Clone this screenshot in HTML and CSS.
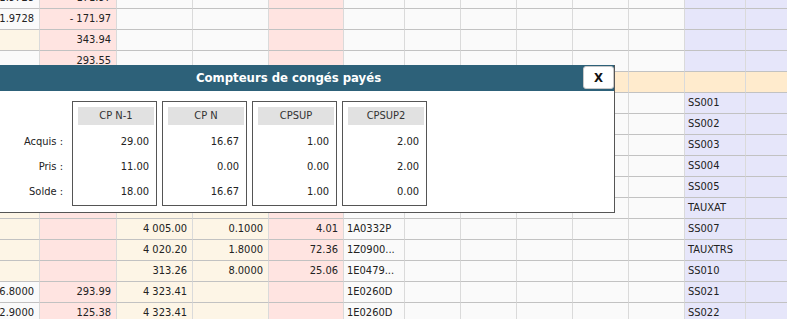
FILE: index.html
```html
<!DOCTYPE html>
<html lang="fr">
<head>
  <meta charset="UTF-8">
  <meta name="viewport" content="width=device-width, initial-scale=1">
  <title>Compteurs de congés payés</title>
  <link rel="stylesheet" href="styles.css">
</head>
<body>

  <!-- Grille des rubriques (derrière la fenêtre) -->
  <div class="grille" id="grille"></div>

  <!-- Fenêtre : compteurs de congés -->
  <div class="modale">
    <div class="modale-titre">
      Compteurs de congés payés
      <button class="fermer">X</button>
    </div>
    <div class="modale-corps">
      <div class="libelles">
        <div>Acquis :</div>
        <div>Pris :</div>
        <div>Solde :</div>
      </div>
      <div class="compteurs">
        <div class="compteur">
          <div class="compteur-titre">CP N-1</div>
          <div class="valeur">29.00</div>
          <div class="valeur">11.00</div>
          <div class="valeur">18.00</div>
        </div>
        <div class="compteur">
          <div class="compteur-titre">CP N</div>
          <div class="valeur">16.67</div>
          <div class="valeur">0.00</div>
          <div class="valeur">16.67</div>
        </div>
        <div class="compteur">
          <div class="compteur-titre">CPSUP</div>
          <div class="valeur">1.00</div>
          <div class="valeur">0.00</div>
          <div class="valeur">1.00</div>
        </div>
        <div class="compteur">
          <div class="compteur-titre">CPSUP2</div>
          <div class="valeur">2.00</div>
          <div class="valeur">2.00</div>
          <div class="valeur">0.00</div>
        </div>
      </div>
    </div>
  </div>

  <script>
    // couleurs : b = blanc, r = rose, c = crème, l = lavande
    const lignes = [
      { fond: 'brbbrbbbbbbll', textes: ['171.9728', '171.97'] },
      { fond: 'brbbrbbbbbbll', textes: ['171.9728', '- 171.97'] },
      { fond: 'crbbrbbbbbbll', textes: ['', '343.94'] },
      { fond: 'brbbrbbbbbbll', textes: ['', '293.55'] },
      { total: true, textes: [] },
      { fond: 'crccrbbbbbbll', textes: ['', '', '', '', '', '', '', '', '', '', '', 'SS001'] },
      { fond: 'crccrbbbbbbll', textes: ['', '', '', '', '', '', '', '', '', '', '', 'SS002'] },
      { fond: 'crccrbbbbbbll', textes: ['', '', '', '', '', '', '', '', '', '', '', 'SS003'] },
      { fond: 'crccrbbbbbbll', textes: ['', '', '', '', '', '', '', '', '', '', '', 'SS004'] },
      { fond: 'crccrbbbbbbll', textes: ['', '', '', '', '', '', '', '', '', '', '', 'SS005'] },
      { fond: 'crccrbbbbbbll', textes: ['', '', '', '', '', '', '', '', '', '', '', 'TAUXAT'] },
      { fond: 'crccrbbbbbbll', textes: ['', '', '4 005.00', '0.1000', '4.01', '1A0332P', '', '', '', '', '', 'SS007'] },
      { fond: 'crccrbbbbbbll', textes: ['', '', '4 020.20', '1.8000', '72.36', '1Z0900...', '', '', '', '', '', 'TAUXTRS'] },
      { fond: 'crccrbbbbbbll', textes: ['', '', '313.26', '8.0000', '25.06', '1E0479...', '', '', '', '', '', 'SS010'] },
      { fond: 'brccrbbbbbbll', textes: ['16.8000', '293.99', '4 323.41', '', '', '1E0260D', '', '', '', '', '', 'SS021'] },
      { fond: 'brccrbbbbbbll', textes: ['12.9000', '125.38', '4 323.41', '', '', '1E0260D', '', '', '', '', '', 'SS022'] }
    ];

    const couleurs = { b: 'blanc', r: 'rose', c: 'creme', l: 'lavande' };
    const grille = document.getElementById('grille');

    lignes.forEach(ligne => {
      for (let col = 0; col < 13; col++) {
        const cellule = document.createElement('div');
        let classe = ligne.total ? 'total' : couleurs[ligne.fond[col]];
        if (col === 5 || col >= 11) classe += ' gauche';
        cellule.className = `cellule ${classe}`;
        cellule.textContent = ligne.textes[col] || '';
        grille.appendChild(cellule);
      }
    });
  </script>

</body>
</html>
```

FILE: styles.css
```css
body {
  margin: 0;
  height: 319px;
  overflow: hidden;
  position: relative;
  background: #fafafa;
  font-family: "DejaVu Sans Condensed", "Liberation Sans", sans-serif;
  font-size: 11px;
  color: #222;
}
.grille {
  display: grid;
  grid-template-columns: 77px 77px 76px 76px 75px 61px 56px 56px 56px 56px 56px 61px 61px;
  margin: -12px 0 0 -37px;
}
.cellule {
  height: 21px;
  box-sizing: border-box;
  border-right: 1px solid #dadada;
  border-bottom: 1px solid #c2c2c2;
  padding: 0 5px 0 3px;
  line-height: 20px;
  text-align: right;
  white-space: nowrap;
  overflow: hidden;
}
.gauche {
  text-align: left;
}
.blanc {
  background: #fafafa;
}
.rose {
  background: #ffe4e1;
}
.creme {
  background: #fdf5e6;
}
.lavande {
  background: #e6e6fa;
}
.total {
  background: #ffebcd;
}
.modale {
  position: absolute;
  top: 65px;
  left: -38px;
  width: 653px;
  box-sizing: border-box;
  background: white;
  border: 1px solid #555;
  border-top: none;
}
.modale-titre {
  position: relative;
  height: 26px;
  line-height: 26px;
  background: #2d6179;
  color: white;
  font-size: 13px;
  font-weight: bold;
  text-align: center;
}
.fermer {
  position: absolute;
  top: 1px;
  right: 0;
  width: 31px;
  height: 23px;
  padding: 0;
  background: white;
  border: 1px solid #c8c8c8;
  border-radius: 3px;
  font-family: inherit;
  font-size: 13px;
  font-weight: bold;
  color: #111;
}
.modale-corps {
  display: flex;
  align-items: flex-start;
  padding: 10px 0 6px;
}
.libelles {
  width: 100px;
  margin-right: 9px;
  padding-top: 28px;
  text-align: right;
  line-height: 25px;
}
.compteurs {
  display: flex;
  gap: 5px;
}
.compteur {
  width: 85px;
  box-sizing: border-box;
  border: 1px solid #555;
  padding: 5px 2px 1px 5px;
}
.compteur-titre {
  height: 18px;
  line-height: 18px;
  margin-bottom: 4px;
  background: #e1e1e1;
  text-align: center;
  color: #333;
}
.valeur {
  line-height: 25px;
  text-align: right;
  padding-right: 5px;
}
```
